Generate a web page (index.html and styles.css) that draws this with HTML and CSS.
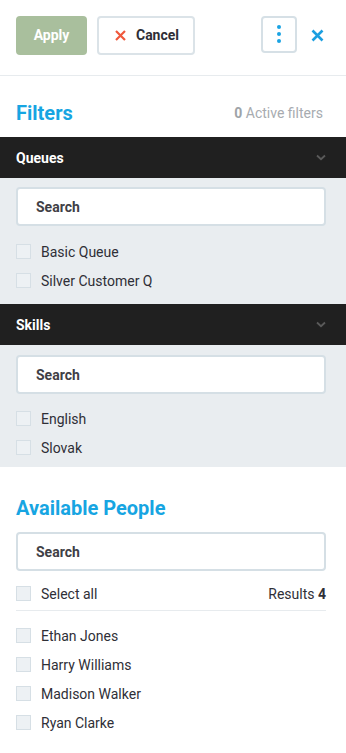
FILE: index.html
```html
<!DOCTYPE html>
<html>
<head>
<meta charset="utf-8">
<link rel="stylesheet" href="styles.css">
</head>
<body>
<div class="panel">
  <div class="toolbar">
    <button class="btn btn-apply">Apply</button>
    <button class="btn btn-cancel">
      <svg class="cancel-x" width="11" height="11" viewBox="0 0 11 11"><path d="M1 1L10 10M10 1L1 10" stroke="#f0583c" stroke-width="2.2" fill="none"/></svg>
      Cancel
    </button>
    <div class="spacer"></div>
    <button class="btn btn-more">
      <span class="dot"></span><span class="dot"></span><span class="dot"></span>
    </button>
    <svg class="close-x" width="13" height="13" viewBox="0 0 13 13"><path d="M1.5 1.5L11.5 11.5M11.5 1.5L1.5 11.5" stroke="#1c9fe0" stroke-width="2.6" fill="none"/></svg>
  </div>

  <div class="filters-head">
    <h2 class="title">Filters</h2>
    <div class="active"><b>0</b> Active filters</div>
  </div>

  <div class="group-bar">
    <span>Queues</span>
    <svg width="10" height="7" viewBox="0 0 10 7"><path d="M1 1.5L5 5.2L9 1.5" stroke="#5a5a5a" stroke-width="1.8" fill="none"/></svg>
  </div>
  <div class="group-body group-queues">
    <div class="search">Search</div>
    <ul class="list">
      <li><span class="cb"></span>Basic Queue</li>
      <li><span class="cb"></span>Silver Customer Q</li>
    </ul>
  </div>

  <div class="group-bar">
    <span>Skills</span>
    <svg width="10" height="7" viewBox="0 0 10 7"><path d="M1 1.5L5 5.2L9 1.5" stroke="#5a5a5a" stroke-width="1.8" fill="none"/></svg>
  </div>
  <div class="group-body group-skills">
    <div class="search">Search</div>
    <ul class="list">
      <li><span class="cb"></span>English</li>
      <li><span class="cb"></span>Slovak</li>
    </ul>
  </div>

  <div class="people">
    <h2 class="title">Available People</h2>
    <div class="search">Search</div>
    <div class="select-row">
      <div class="item"><span class="cb"></span>Select all</div>
      <div class="results">Results <b>4</b></div>
    </div>
    <ul class="list people-list">
      <li><span class="cb"></span>Ethan Jones</li>
      <li><span class="cb"></span>Harry Williams</li>
      <li><span class="cb"></span>Madison Walker</li>
      <li><span class="cb"></span>Ryan Clarke</li>
    </ul>
  </div>
</div>
</body>
</html>
```

FILE: styles.css
```css
* { box-sizing: border-box; }
html, body { margin: 0; padding: 0; background: #fff; }
body { font-family: Roboto, "Liberation Sans", Arial, sans-serif; color: #333; font-size: 14px; }
.panel { width: 346px; }

.toolbar {
  display: flex;
  align-items: center;
  height: 76px;
  padding: 0 16px 5px;
  border-bottom: 1px solid #e7ebee;
}
.btn {
  font-family: inherit;
  font-size: 14px;
  font-weight: 700;
  height: 39px;
  border-radius: 4px;
  cursor: pointer;
  display: flex;
  align-items: center;
  justify-content: center;
}
.btn-apply {
  width: 71px;
  background: #a9bf9d;
  border: none;
  color: #fff;
}
.btn-cancel {
  width: 98px;
  margin-left: 10px;
  background: #fff;
  border: 2px solid #dbe3e8;
  color: #2e2e36;
  gap: 10px;
  padding: 0 0 0 2px;
}
.spacer { flex: 1; }
.btn-more {
  width: 36px;
  height: 37px;
  background: #fff;
  border: 2px solid #d6e0e6;
  flex-direction: column;
  gap: 3px;
  padding: 0;
  margin-top: -2px;
}
.dot { width: 4px; height: 4px; border-radius: 50%; background: #1aa3e3; }
.close-x { margin-left: 14px; margin-right: 6px; }

.filters-head {
  display: flex;
  justify-content: space-between;
  align-items: center;
  height: 61px;
  padding: 13px 23px 0 16px;
}
.title {
  margin: 0;
  font-size: 20px;
  line-height: 24px;
  font-weight: 700;
  color: #17a5e2;
}
.active { color: #a7abb0; font-size: 14px; }
.active b { color: #9ea3a8; }

.group-bar {
  height: 41px;
  background: #202020;
  color: #fff;
  font-weight: 700;
  font-size: 14px;
  display: flex;
  align-items: center;
  justify-content: space-between;
  padding: 0 20px 0 16px;
}
.group-body {
  background: #e9edf0;
  padding: 9px 20px 9px 16px;
}
.group-skills { padding-top: 10px; padding-bottom: 5px; }
.group-skills .list { margin-top: 10px; }

.search {
  height: 39px;
  background: #fff;
  border: 2px solid #d5dfe5;
  border-radius: 4px;
  display: flex;
  align-items: center;
  padding-left: 18px;
  font-weight: 700;
  color: #3f4046;
  font-size: 14px;
}

.list { list-style: none; margin: 11px 0 0; padding: 0; }
.list li, .item {
  height: 29px;
  display: flex;
  align-items: center;
  gap: 10px;
  color: #2f2f37;
}
.cb {
  width: 15px;
  height: 15px;
  border: 1px solid #d6dfe5;
  background: #edf1f4;
  flex: none;
}

.people { padding: 29px 20px 20px 16px; }
.people .title { margin-bottom: 12px; }
.select-row {
  display: flex;
  justify-content: space-between;
  align-items: center;
  margin-top: 8px;
  padding-bottom: 2px;
  border-bottom: 1px solid #e7ebee;
}
.results { color: #2f2f37; }
.people-list { margin-top: 10px; }
```
